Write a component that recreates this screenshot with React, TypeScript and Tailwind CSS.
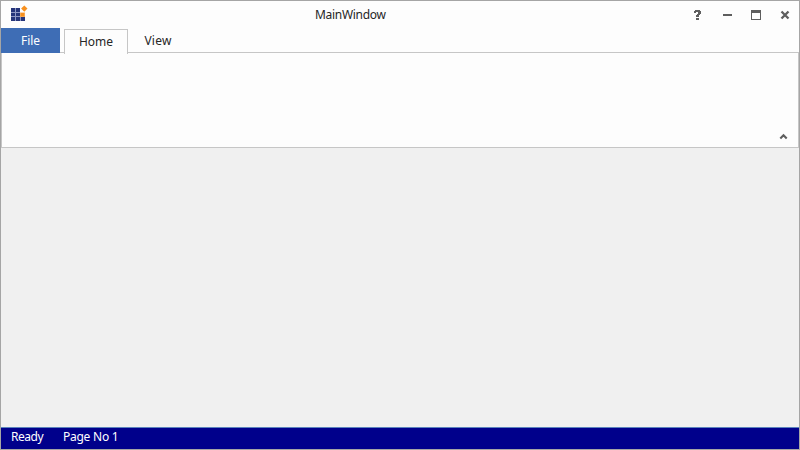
export default function App() {
  return (
    <div className="flex h-[450px] w-[800px] flex-col overflow-hidden border border-[#a5a5a5] bg-[#f0f0f0] font-['Noto_Sans','Open_Sans',sans-serif] text-[12px] leading-[16px] text-[#262626]">
      <header className="flex h-[27px] shrink-0 items-start bg-[#fdfdfd]">
        <svg className="ml-[9px] mt-[4px] shrink-0" width="18" height="18" viewBox="10 5 18 18">
          <path fill="#8f98c4" d="M11 8h9v5h5v8H11z" />
          <path fill="#26357a" d="M11 8h4v4h-4zM16 8h4v4h-4zM11 13h4v3h-4zM16 13h4v3h-4zM11 17h4v4h-4zM16 17h4v4h-4zM21 17h4v4h-4z" />
          <path fill="#f9a850" d="M20 12.5h5V17h-5z" />
          <path fill="#f7901e" d="M21 13h3v3h-3zM24.3 5.4l3.2 3.2-3.2 3.2-3.2-3.2z" />
        </svg>
        <h1 className="ml-[287px] mt-[6px] w-[72px] whitespace-nowrap text-[12px] tracking-[-0.3px]">MainWindow</h1>
        <div className="flex-1" />
        <svg className="mr-[7px] mt-[6px] shrink-0" width="103" height="16" viewBox="689 7 103 16" fill="#5e5e5e">
          <path d="M695 10h5v1h1v3h-1v1h-1v2h-3v-2h1v-1h1v-2h-2v1h-2v-2h1zM696 18h3v2h-3z" />
          <path d="M723 14h9v2h-9z" />
          <path fillRule="evenodd" d="M751 10h10v10h-10zM752 13h8v6h-8z" />
          <path d="M781.5 11.5l7 7M788.5 11.5l-7 7" fill="none" stroke="#5e5e5e" strokeWidth="2.3" />
        </svg>
      </header>
      <nav className="z-10 flex h-[25px] shrink-0">
        <button className="w-[59px] bg-[#3e6db5] tracking-[-0.1px] text-white">File</button>
        <div className="w-1 border-b border-[#c6c6c6] bg-[#fdfdfd]" />
        <div className="-mb-px flex w-16 bg-[#fdfdfd] pt-px">
          <button className="w-full border border-b-0 border-[#c6c6c6] pb-px">Home</button>
        </div>
        <button className="w-[60px] border-b border-[#c6c6c6] bg-[#fdfdfd] pt-px tracking-[0.2px]">View</button>
        <div className="flex-1 border-b border-[#c6c6c6] bg-[#fdfdfd]" />
      </nav>
      <section className="flex h-[95px] shrink-0 items-end justify-end border border-t-0 border-[#c6c6c6] bg-[#fdfdfd]">
        <svg className="mb-[7px] mr-[10px]" width="9" height="7" viewBox="0 0 9 7" fill="none" stroke="#5e5e5e" strokeWidth="2.1">
          <path d="M1.3 5.4l3.2-3.2 3.2 3.2" />
        </svg>
      </section>
      <main className="flex-1" />
      <footer className="flex h-[22px] shrink-0 border-t border-[#5b83bd] bg-[#00008b] px-[10px] pt-px text-white">
        <span className="w-[52px] tracking-[-0.45px]">Ready</span>
        <span className="tracking-[-0.25px]">Page No 1</span>
      </footer>
    </div>
  );
}
